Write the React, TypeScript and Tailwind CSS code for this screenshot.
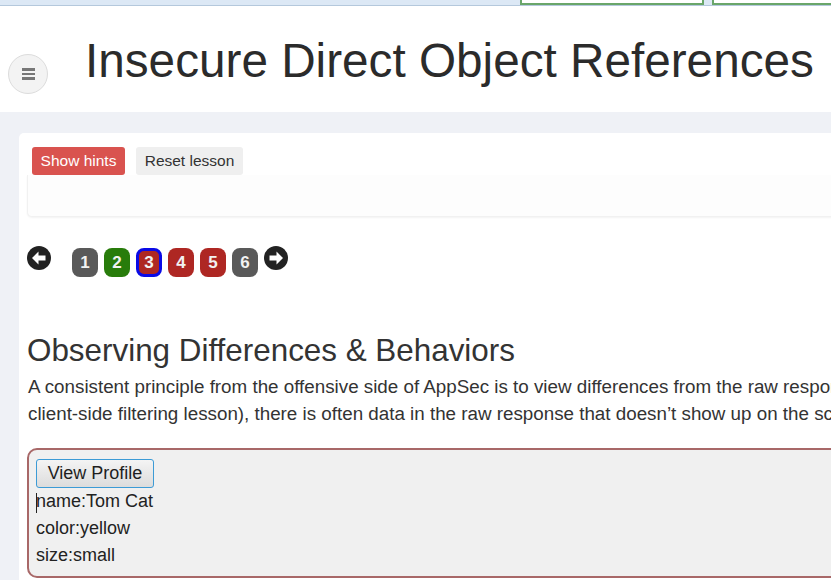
import React from 'react'

const pages = [
  { n: 1, bg: 'bg-[#595959]', ring: false },
  { n: 2, bg: 'bg-[#287c0b]', ring: false },
  { n: 3, bg: 'bg-[#ae2723]', ring: true },
  { n: 4, bg: 'bg-[#ae2723]', ring: false },
  { n: 5, bg: 'bg-[#ae2723]', ring: false },
  { n: 6, bg: 'bg-[#595959]', ring: false },
]

function ArrowCircle({ dir }: { dir: 'left' | 'right' }) {
  return (
    <svg width="24" height="24" viewBox="0 0 24 24" className="shrink-0">
      <circle cx="12" cy="12" r="12" fill="#222" />
      <g transform={dir === 'right' ? 'rotate(180 12 12)' : undefined}>
        <path d="M5 12 L11.5 5.6 L11.5 9.6 L18.5 9.6 L18.5 14.4 L11.5 14.4 L11.5 18.4 Z" fill="#fff" />
      </g>
    </svg>
  )
}

export default function App() {
  return (
    <div className="w-[831px] h-[580px] overflow-hidden bg-white text-[#333]" style={{ fontFamily: '"Liberation Sans", Arial, sans-serif' }}>
      {/* top strip */}
      <div className="flex h-[6px] bg-[#dce8f5] border-b border-[#b4c8dc]">
        <div className="ml-[520px] w-[184px] h-[5px] bg-white border-x-2 border-b-2 border-[#6aa66a]" />
        <div className="ml-[8px] flex-1 h-[5px] bg-white border-l-2 border-b-2 border-[#6aa66a]" />
      </div>

      {/* header */}
      <div className="flex items-start h-[106px]">
        <div className="ml-[8px] mt-[48px] w-[40px] h-[40px] rounded-full bg-[#f3f3f3] border border-[#dcdcdc] flex flex-col items-center justify-center gap-[2px] shrink-0">
          <span className="block w-[13px] h-[2.5px] bg-[#777]" />
          <span className="block w-[13px] h-[2.5px] bg-[#777]" />
          <span className="block w-[13px] h-[2.5px] bg-[#777]" />
        </div>
        <h1 className="ml-[37px] mt-[31px] text-[47.7px] leading-[48px] whitespace-nowrap text-[#2b2b2b]">
          Insecure Direct Object References
        </h1>
      </div>

      {/* content area */}
      <div className="bg-[#eff1f6] pt-[21px] pl-[19px] h-[474px]">
        <div className="w-[1000px] h-full bg-white rounded-tl-[5px] pt-[14px]">
          <div className="flex gap-[11px] pl-[13px] text-[15.5px] leading-[28px]">
            <button className="w-[93px] h-[28px] rounded-[3px] bg-[#d9534f] text-white text-center">Show hints</button>
            <button className="w-[107px] h-[28px] rounded-[3px] bg-[#efefef] text-[#333] text-center">Reset lesson</button>
          </div>
          <div className="ml-[8px] h-[42px] bg-[#fdfdfd] border border-t-0 border-[#f1f1f1] rounded-b-[5px] shadow-[0_1px_2px_rgba(0,0,0,0.05)]" />

          {/* pagination */}
          <div className="flex items-start ml-[8px] mt-[29px]">
            <ArrowCircle dir="left" />
            <div className="flex gap-[6px] ml-[21px] mt-[2px]">
              {pages.map((p) => (
                <div
                  key={p.n}
                  className={`w-[26px] h-[29px] rounded-[8px] ${p.bg} ${p.ring ? 'border-[3px] border-[#0a0ae6]' : ''} flex items-center justify-center text-[17px] font-bold text-[#f2f2f2]`}
                >
                  {p.n}
                </div>
              ))}
            </div>
            <div className="ml-[6px]">
              <ArrowCircle dir="right" />
            </div>
          </div>

          <h2 className="ml-[8px] mt-[57px] text-[31.4px] leading-[34px] whitespace-nowrap text-[#333]">
            Observing Differences &amp; Behaviors
          </h2>
          <p className="ml-[9px] mt-[5px] text-[18.8px] leading-[27px] whitespace-nowrap text-[#333]">
            A consistent principle from the offensive side of AppSec is to view differences from the raw response and what is visible. In other words (as you may have already noted in the
            <br />
            client-side filtering lesson), there is often data in the raw response that doesn’t show up on the screen/page. View the profile below and take note of the differences.
          </p>

          {/* profile box */}
          <div className="ml-[8px] mt-[21px] h-[130px] border-2 border-[#a86868] rounded-[10px] bg-[#f0f0f0] pt-[9px] pl-[7px]">
            <button className="w-[118px] h-[29px] rounded-[3px] border border-[#3c9bd6] bg-gradient-to-b from-[#f4f4f4] to-[#dcdcdc] text-[18px] leading-[27px] text-[#1e1e1e]">
              View Profile
            </button>
            <div className="text-[18px] leading-[27px] text-[#222]">
              <div className="relative">
                <span className="absolute left-0 top-[5px] h-[20px] border-l border-[#222]" />
                name:Tom Cat
              </div>
              <div>color:yellow</div>
              <div>size:small</div>
            </div>
          </div>
        </div>
      </div>
    </div>
  )
}
